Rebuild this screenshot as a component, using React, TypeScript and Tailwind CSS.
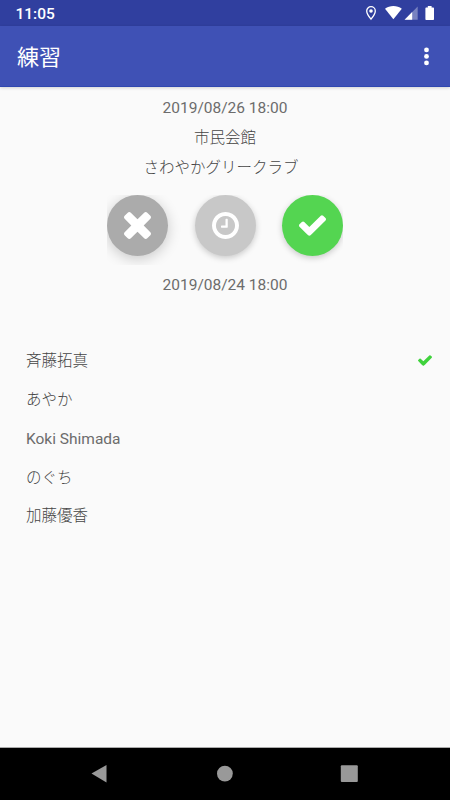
import React from 'react';

const CHECK_PATH = 'M1671 566q0 40-28 68l-724 724-136 136q-28 28-68 28t-68-28l-136-136-362-362q-28-28-28-68t28-68l136-136q28-28 68-28t68 28l294 295 656-657q28-28 68-28t68 28l136 136q28 28 28 68z';
const TIMES_PATH = 'M1490 1322q0 40-28 68l-136 136q-28 28-68 28t-68-28l-294-294-294 294q-28 28-68 28t-68-28l-136-136q-28-28-28-68t28-68l294-294-294-294q-28-28-28-68t28-68l136-136q28-28 68-28t68 28l294 294 294-294q28-28 68-28t68 28l136 136q28 28 28 68t-28 68l-294 294 294 294q28 28 28 68z';
const CLOCK_PATH = 'M1024 544v448q0 14-9 23t-23 9h-320q-14 0-23-9t-9-23v-64q0-14 9-23t23-9h224v-352q0-14 9-23t23-9h64q14 0 23 9t9 23zm416 352q0-148-73-273t-198-198-273-73-273 73-198 198-73 273 73 273 198 198 273 73 273-73 198-198 73-273zm224 0q0 209-103 385.5t-279.5 279.5-385.5 103-385.5-103-279.5-279.5-103-385.5 103-385.5 279.5-279.5 385.5-103 385.5 103 279.5 279.5 103 385.5z';

const MEMBERS = [
  { name: '斉藤拓真', attending: true },
  { name: 'あやか', attending: false },
  { name: 'Koki Shimada', attending: false },
  { name: 'のぐち', attending: false },
  { name: '加藤優香', attending: false },
];

const StatusBar: React.FC = () => (
  <div className="flex h-[26px] shrink-0 items-center justify-between bg-[#303f9f] pl-[15.5px] pr-[15px] text-white">
    <span className="pt-0.5 text-[15.5px] font-medium leading-6">11:05</span>
    <svg className="h-[26px] w-[70px]" viewBox="0 0 70 26" fill="currentColor">
      <path d="M6 6.7a4.3 4.3 0 0 0-4.3 4.3c0 3.1 4.3 8.2 4.3 8.2s4.3-5.1 4.3-8.2A4.3 4.3 0 0 0 6 6.7z" fill="none" stroke="currentColor" strokeWidth="1.3" />
      <circle cx="6" cy="11" r="1.8" />
      <path d="M20 8.7C22.4 6.8 25.3 5.9 28.4 5.9s6 .9 8.4 2.8L28.4 19.2z" />
      <path d="M52.7 6.6v13.1H39.6z" opacity=".35" />
      <path d="M47.2 12.1v7.6h-7.6z" />
      <path d="M62.8 6h3.8v1.4H68c.6 0 1 .4 1 1V19c0 .6-.4 1-1 1h-6.6c-.6 0-1-.4-1-1V8.4c0-.6.4-1 1-1h1.4z" />
    </svg>
  </div>
);

const AppBar: React.FC = () => (
  <header className="flex h-[61px] shrink-0 items-center justify-between border-b border-[#3048b0] bg-[#3f51b5] pl-[17px] pr-[21.5px] text-white shadow-[0_1px_3px_rgba(0,0,0,0.16)]">
    <h1 className="pt-[3px] text-[22px] font-normal leading-8">練習</h1>
    <button aria-label="menu" className="pt-px">
      <svg className="h-[19px] w-[5px]" viewBox="0 0 5 19" fill="currentColor">
        <circle cx="2.5" cy="2.9" r="2.4" />
        <circle cx="2.5" cy="9.4" r="2.4" />
        <circle cx="2.5" cy="15.9" r="2.4" />
      </svg>
    </button>
  </header>
);

const AttendanceButtons: React.FC = () => (
  <div className="mt-3 flex h-[70px] w-[236px] items-start justify-between overflow-hidden">
    <button aria-label="absent" className="flex h-[61px] w-[61px] items-center justify-center rounded-full bg-[#ababab] shadow-[0_3px_14px_rgba(0,0,0,0.2)]">
      <svg className="h-[27px] w-[27px]" viewBox="302 366 1188 1188" fill="#fff"><path d={TIMES_PATH} /></svg>
    </button>
    <button aria-label="late" className="flex h-[61px] w-[61px] items-center justify-center rounded-full bg-[#c8c8c8] shadow-[0_2px_6px_rgba(0,0,0,0.2)]">
      <svg className="h-[27px] w-[27px]" viewBox="128 128 1536 1536" fill="#fff"><path d={CLOCK_PATH} /></svg>
    </button>
    <button aria-label="attend" className="flex h-[61px] w-[61px] items-center justify-center rounded-full bg-[#54d551] shadow-[0_2px_6px_rgba(0,0,0,0.2)]">
      <svg className="h-[21px] w-[27px]" viewBox="121 334 1550 1188" fill="#fff"><path d={CHECK_PATH} /></svg>
    </button>
  </div>
);

const NavigationBar: React.FC = () => (
  <nav className="flex h-[53px] shrink-0 justify-center border-t border-[#aaa] bg-black">
    <svg className="h-[52px] w-[450px]" viewBox="0 0 450 52" fill="#999">
      <path d="M91.5 25.6 106.5 17v17.5z" />
      <circle cx="224.9" cy="25.6" r="7.9" />
      <rect x="340.8" y="17.2" width="17" height="16.8" rx="1" />
    </svg>
  </nav>
);

const App: React.FC = () => (
  <div className="flex h-[800px] w-[450px] flex-col overflow-hidden bg-[#fafafa] font-[Roboto,'Noto_Sans_CJK_JP',sans-serif]">
    <StatusBar />
    <AppBar />
    <main className="flex flex-1 flex-col items-center pt-1.5 text-[15.5px] font-light text-[#444]">
      <p className="h-[30px] font-normal leading-[30px] text-[#6c6c6c]">2019/08/26 18:00</p>
      <p className="h-[30px] leading-[30px]">市民会館</p>
      <p className="h-[30px] pr-2 leading-[30px]">さわやかグリークラブ</p>
      <AttendanceButtons />
      <p className="mt-[5px] h-[30px] font-normal leading-[30px] text-[#6c6c6c]">2019/08/24 18:00</p>
      <ul className="mt-[41px] w-full pl-[26px] pr-[18px]">
        {MEMBERS.map((member) => (
          <li key={member.name} className="flex h-[38.8px] items-center justify-between">
            <span className={/^[A-Za-z ]+$/.test(member.name) ? 'pt-[3px] font-normal text-[#6c6c6c]' : 'pt-[3px]'}>{member.name}</span>
            {member.attending && (
              <svg className="h-[11px] w-[14px]" viewBox="121 334 1550 1188" fill="#3fd23c"><path d={CHECK_PATH} /></svg>
            )}
          </li>
        ))}
      </ul>
    </main>
    <NavigationBar />
  </div>
);

export default App;
